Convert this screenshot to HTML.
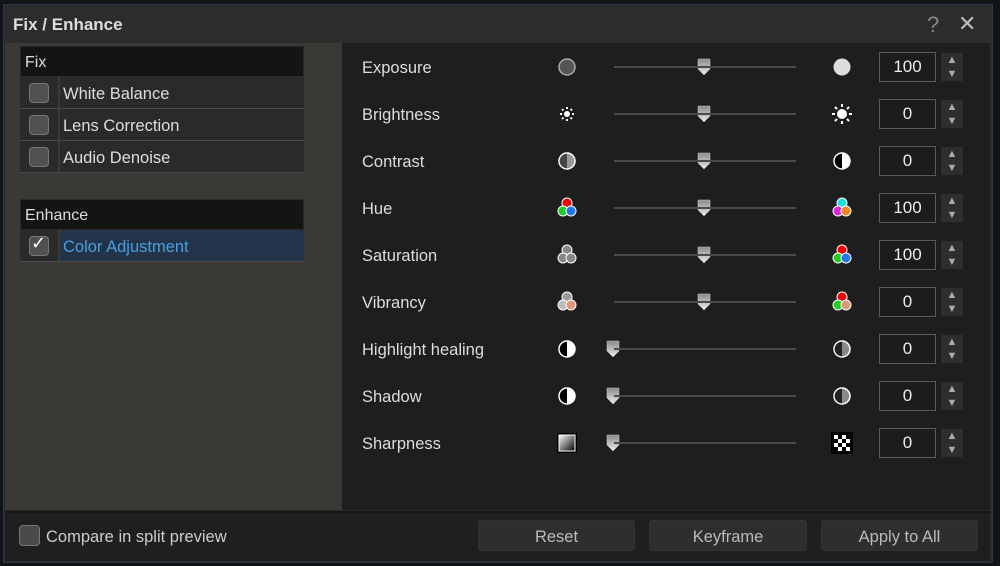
<!DOCTYPE html>
<html><head><style>
*{box-sizing:border-box;margin:0;padding:0}
body{width:1000px;height:566px;background:#111418;font-family:"Liberation Sans",sans-serif;position:relative;overflow:hidden}
.dlg{position:absolute;left:3px;top:4px;width:990px;height:559px;background:#2c2c2c;border:1px solid #2a3a4e}
.abs{position:absolute}
.title{left:13px;top:15px;color:#ddd;font-weight:bold;font-size:17px}
.lp{left:5px;top:43px;width:337px;height:467px;background:#3a3935}
.rp{left:342px;top:43px;width:648px;height:467px;background:#1e1e1e}
.bb{left:5px;top:511px;width:985px;height:50px;background:#1f1f1f;border-top:2px solid #151515}
.hdr{background:#141414;color:#ddd;font-size:16px;padding-left:4px;line-height:32px;border:1px solid #2a2a2a}
.row{height:32px;background:#2a2a2a;border-bottom:1px solid #4a4a4a;display:flex}
.cb{width:40px;border-right:2px solid #3a3a3a;display:flex;align-items:center;justify-content:center}
.box{width:20px;height:20px;border:1.5px solid #777;border-radius:4px;background:#505050}
.lbl{color:#ddd;font-size:16.5px;line-height:34px;padding-left:3px}
.rl{color:#ddd;font-size:16.5px;left:362px}
.track{height:2px;background:#4a4a4a;left:614px;width:182px}
.num{left:879px;width:57px;height:30px;border:1px solid #5a5a5a;color:#eee;font-size:17px;text-align:center;line-height:28px;background:#1c1c1c}
.sp{left:941px;width:22px;height:28px;background:#2e2e2e}
.btn{top:520px;height:31px;background:#2e2e2e;border-radius:3px;color:#bbb;font-size:16.5px;text-align:center;line-height:33px;border:1px solid #333}
</style></head><body>
<div class="dlg"></div>
<div class="abs title">Fix / Enhance</div>
<div class="abs" style="left:927px;top:12px;color:#888;font-size:22px">?</div>
<div class="abs" style="left:958px;top:13px;color:#bbb;font-size:22px;line-height:22px">✕</div>
<div class="abs lp"></div>
<div class="abs rp"></div>
<div class="abs bb"></div>
<div class="abs" style="left:20px;top:46px;width:284px">
<div class="hdr" style="height:31px">Fix</div>
<div class="row"><div class="cb"><div class="box"></div></div><div class="lbl">White Balance</div></div>
<div class="row"><div class="cb"><div class="box"></div></div><div class="lbl">Lens Correction</div></div>
<div class="row"><div class="cb"><div class="box"></div></div><div class="lbl">Audio Denoise</div></div>
</div>
<div class="abs" style="left:20px;top:199px;width:284px">
<div class="hdr" style="height:31px">Enhance</div>
<div class="row" style="background:#23344a"><div class="cb" style="background:#2a2a2a"><div class="box" style="position:relative"><span style="position:absolute;left:1px;top:-4px;color:#fff;font-size:18px">✓</span></div></div><div class="lbl" style="color:#4a9ee0">Color Adjustment</div></div>
</div>

<svg class="abs" style="left:0;top:0" width="1000" height="566">
<defs>
<linearGradient id="tg" x1="0" y1="0" x2="0" y2="1"><stop offset="0" stop-color="#888"/><stop offset="1" stop-color="#eee"/></linearGradient>
<linearGradient id="sq" x1="0" y1="0" x2="1" y2="1"><stop offset="0" stop-color="#fff"/><stop offset="1" stop-color="#000"/></linearGradient>
</defs>
<g id="rows"></g>
</svg>
<div id="c"></div>
<script>
var rows=[["Exposure","100",704],["Brightness","0",704],["Contrast","0",704],["Hue","100",704],["Saturation","100",704],["Vibrancy","0",704],["Highlight healing","0",613],["Shadow","0",613],["Sharpness","0",613]];
var h="",s="";
function th(x,y){return '<path d="M'+(x-6)+' '+(y-8)+'h12v10l-6 6l-6-6z" fill="url(#tg)" stroke="#ccc" stroke-width="0.5"/>';}
function sun(x,y,r,l){var o='<circle cx="'+x+'" cy="'+y+'" r="'+r+'" fill="#fff"/>';for(var i=0;i<8;i++){var a=i*Math.PI/4;o+='<line x1="'+(x+Math.cos(a)*(r+2))+'" y1="'+(y+Math.sin(a)*(r+2))+'" x2="'+(x+Math.cos(a)*(r+2+l))+'" y2="'+(y+Math.sin(a)*(r+2+l))+'" stroke="#fff" stroke-width="2"/>';}return o;}
function half(x,y,lc,rc){return '<circle cx="'+x+'" cy="'+y+'" r="8" fill="'+rc+'" stroke="#fff" stroke-width="1.5"/><path d="M'+x+' '+(y-7.3)+'A7.3 7.3 0 0 0 '+x+' '+(y+7.3)+'z" fill="'+lc+'"/>';}
function tri(x,y,a,b,c){return '<circle cx="'+x+'" cy="'+(y-5)+'" r="5" fill="'+a+'" stroke="#fff" stroke-width="1"/><circle cx="'+(x-4)+'" cy="'+(y+3)+'" r="5" fill="'+b+'" stroke="#fff" stroke-width="1"/><circle cx="'+(x+4)+'" cy="'+(y+3)+'" r="5" fill="'+c+'" stroke="#fff" stroke-width="1"/>';}
rows.forEach(function(r,i){var y=67+i*47;
h+='<div class="abs rl" style="top:'+(y-8)+'px">'+r[0]+'</div>';
h+='<div class="abs track" style="top:'+(y-1)+'px"></div>';
h+='<div class="abs num" style="top:'+(y-15)+'px">'+r[1]+'</div>';
h+='<div class="abs sp" style="top:'+(y-14)+'px"><div style="color:#aaa;font-size:11px;text-align:center;line-height:14px">▲<br>▼</div></div>';
var lx=567,rx=842,o='';
if(i==0){o+='<circle cx="'+lx+'" cy="'+y+'" r="8" fill="#555" stroke="#aaa" stroke-width="1.5"/><circle cx="'+rx+'" cy="'+y+'" r="8.5" fill="#ddd"/>';}
if(i==1){o+=sun(lx,y,3,2)+sun(rx,y,5,3);}
if(i==2){o+=half(lx,y,'#444','#999')+half(rx,y,'#000','#fff');}
if(i==3){o+=tri(lx,y,'#e00','#2c2','#27e')+tri(rx,y,'#2dd','#d2d','#e82');}
if(i==4){o+=tri(lx,y,'#888','#888','#888')+tri(rx,y,'#e00','#2c2','#27e');}
if(i==5){o+=tri(lx,y,'#999','#bbb','#d97')+tri(rx,y,'#e00','#2c2','#d97');}
if(i==6||i==7){o+=half(lx,y,'#000','#fff')+half(rx,y,'#222','#888');}
if(i==8){o+='<rect x="'+(lx-10)+'" y="'+(y-10)+'" width="20" height="20" fill="#000"/><rect x="'+(lx-8)+'" y="'+(y-8)+'" width="16" height="16" fill="url(#sq)" stroke="#fff" stroke-width="1"/>';
o+='<rect x="'+(rx-11)+'" y="'+(y-11)+'" width="22" height="22" fill="#000"/><rect x="'+(rx-8)+'" y="'+(y-8)+'" width="16" height="16" fill="#fff"/>';
for(var a=0;a<4;a++)for(var b=0;b<4;b++)if((a+b)%2)o+='<rect x="'+(rx-8+a*4)+'" y="'+(y-8+b*4)+'" width="4" height="4" fill="#000"/>';}
o+=th(r[2],y);s+=o;});
document.getElementById('c').innerHTML=h;
document.getElementById('rows').innerHTML=s;
</script>
<div class="abs" style="left:19px;top:525px;width:21px;height:21px;border:1.5px solid #777;border-radius:4px;background:#4a4a4a"></div>
<div class="abs" style="left:46px;top:528px;color:#ccc;font-size:16.5px">Compare in split preview</div>
<div class="abs btn" style="left:478px;width:157px">Reset</div>
<div class="abs btn" style="left:649px;width:158px">Keyframe</div>
<div class="abs btn" style="left:821px;width:157px">Apply to All</div>
</body></html>
